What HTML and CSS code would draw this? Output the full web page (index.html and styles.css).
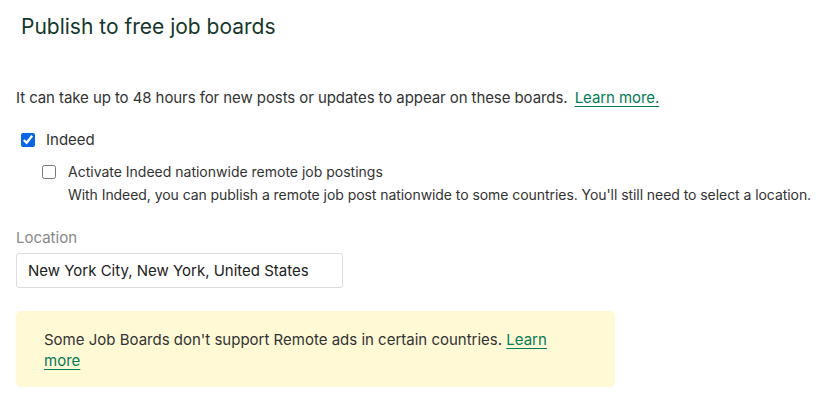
FILE: index.html
```html
<html>
<head>
<meta charset="utf-8"/>
<title>Publish to free job boards</title>
<link rel="stylesheet" href="styles.css">
</head>
<body>

<h2 class="title">Publish to free job boards</h2>

<p class="note">It can take up to 48 hours for new posts or updates to appear on these boards. <a href="#">Learn more.</a></p>

<div class="board">
	<label class="check"><input type="checkbox" checked><span>Indeed</span></label>
	<div class="sub">
		<label class="check"><input type="checkbox"><span>Activate Indeed nationwide remote job postings</span></label>
		<div class="hint">With Indeed, you can publish a remote job post nationwide to some countries. You'll still need to select a location.</div>
	</div>
</div>

<div class="field">
	<div class="label">Location</div>
	<input type="text" class="textbox" value="New York City, New York, United States">
</div>

<div class="warn">Some Job Boards don't support Remote ads in certain countries. <a href="#">Learn more</a></div>

</body>
</html>
```

FILE: styles.css
```css
body {
	margin: 0;
	padding: 0 16px;
	font-family: Inter, "Liberation Sans", sans-serif;
	font-size: 15px;
	color: #333;
	background: white;
}
a {
	color: #047a55;
	text-decoration: underline;
	text-underline-offset: 3px;
}
.title {
	margin: 0;
	padding: 13px 5px 0;
	font-size: 21px;
	font-weight: 400;
	line-height: 28px;
	color: #15372c;
}
.note {
	margin: 46px 0 0;
	line-height: 22px;
	letter-spacing: -0.08px;
}
.note a {
	margin-left: 3px;
}
/* checkboxes */
.board {
	margin-top: 20px;
	padding-left: 5px;
}
.check {
	display: flex;
	align-items: center;
	gap: 11px;
	line-height: 22px;
}
.check input {
	margin: 0;
	width: 14px;
	height: 14px;
	accent-color: #0a66e4;
}
.sub {
	margin-top: 10px;
	padding-left: 21px;
	font-size: 14px;
}
.sub .check {
	gap: 12px;
}
.hint {
	padding-left: 26px;
	line-height: 24px;
	white-space: nowrap;
	letter-spacing: -0.06px;
}
/* location */
.field {
	margin-top: 20px;
}
.label {
	color: #888;
	line-height: 22px;
}
.textbox {
	display: block;
	margin-top: 4px;
	box-sizing: border-box;
	width: 327px;
	height: 35px;
	padding: 0 11px;
	border: 1px solid #ddd;
	border-radius: 3px;
	font-family: inherit;
	font-size: 15px;
	color: #222;
}
.warn {
	margin-top: 23px;
	box-sizing: border-box;
	width: 599px;
	padding: 18px 60px 16px 28px;
	background: #fff9d6;
	border-radius: 5px;
	line-height: 21px;
	color: #333;
}
```
